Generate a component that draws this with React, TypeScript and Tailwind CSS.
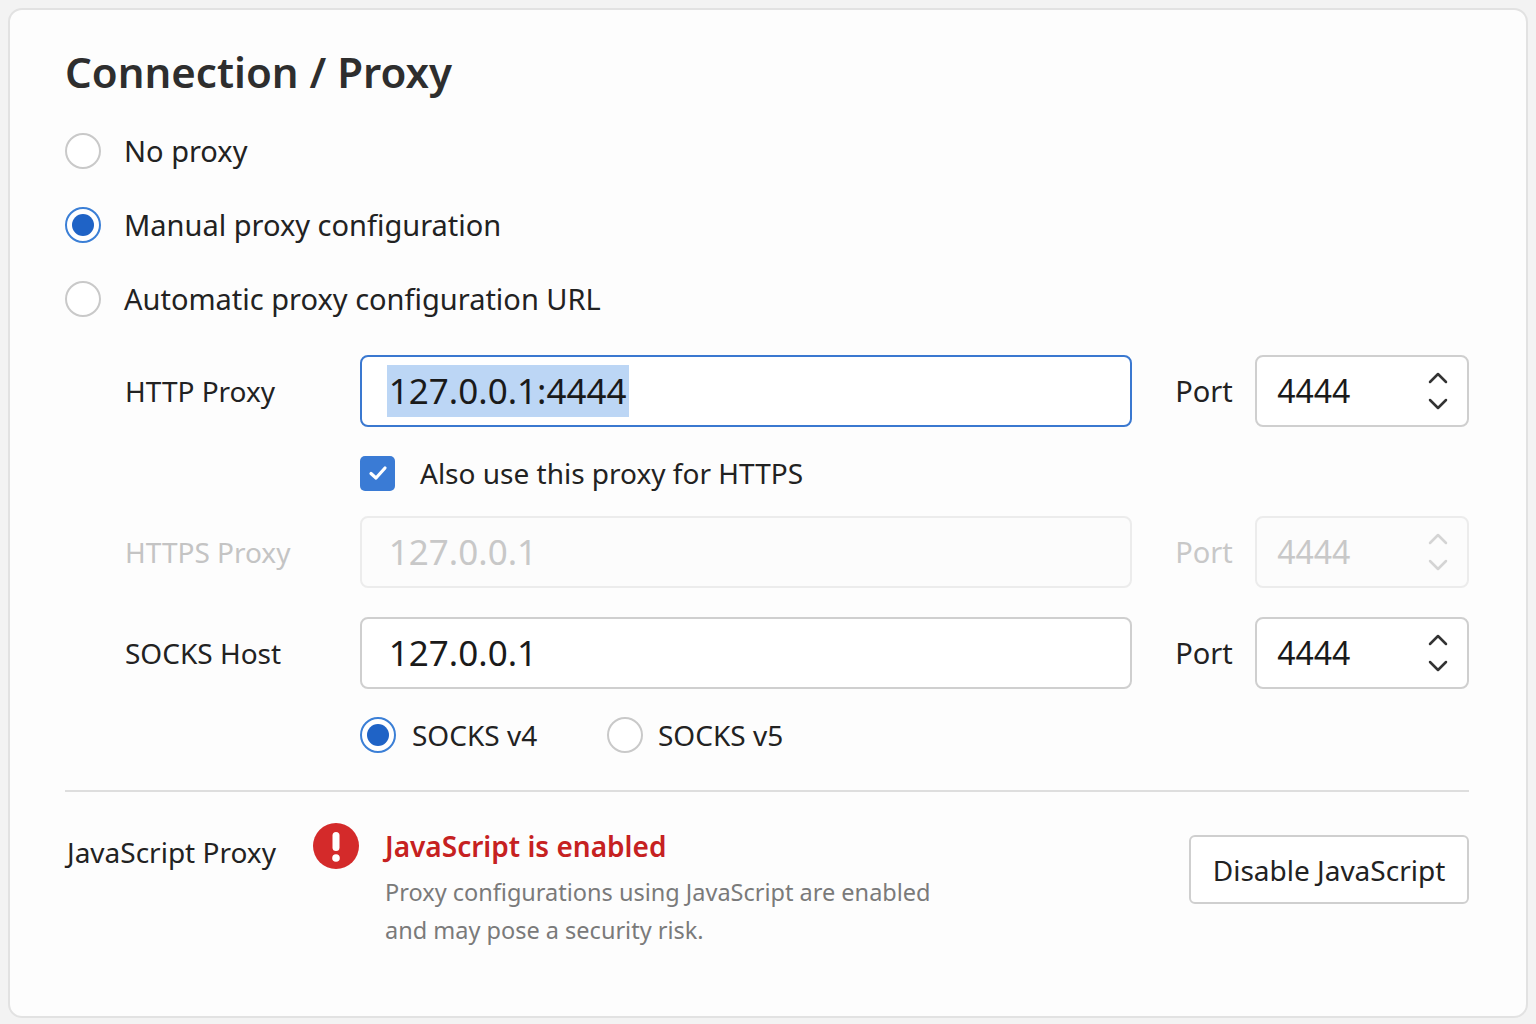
import React from "react";

const F = { fontFamily: '"Noto Sans", "Liberation Sans", sans-serif' };

function Radio({ on, disabled }: { on?: boolean; disabled?: boolean }) {
  return on ? (
    <span className="w-[36px] h-[36px] rounded-full border-[2px] border-[#3b7fd6] flex items-center justify-center shrink-0 bg-white">
      <span className="w-[22px] h-[22px] rounded-full bg-[#1f63c6]" />
    </span>
  ) : (
    <span className={`w-[36px] h-[36px] rounded-full border-[2px] shrink-0 bg-white ${disabled ? "border-[#e0e0e0]" : "border-[#c9c9c9]"}`} />
  );
}

function Spinner({ dim }: { dim?: boolean }) {
  const c = dim ? "#d4d4d4" : "#333";
  return (
    <svg width="22" height="44" viewBox="0 0 22 44" fill="none" stroke={c} strokeWidth="2.5" strokeLinecap="round" strokeLinejoin="round">
      <path d="M3 13 L11 5 L19 13" />
      <path d="M3 31 L11 39 L19 31" />
    </svg>
  );
}

function Row({ label, value, dim, focused, port }: { label: string; value: React.ReactNode; dim?: boolean; focused?: boolean; port: string }) {
  return (
    <div className="flex items-center h-[72px]">
      <div className={`w-[235px] text-[28px] ${dim ? "text-[#c4c4c4]" : "text-[#222]"}`}>{label}</div>
      <div
        className={`w-[773px] h-[72px] rounded-[8px] flex items-center px-[27px] text-[35px] ${
          focused ? "border-[2.5px] border-[#3a78d0] bg-white" : dim ? "border-[2px] border-[#ececec] bg-[#fcfcfc]" : "border-[2px] border-[#cfcfcf] bg-white"
        } ${dim ? "text-[#c8c8c8]" : "text-[#1a1a1a]"}`}
      >
        {value}
      </div>
      <div className={`ml-[43px] w-[80px] text-[29px] ${dim ? "text-[#c8c8c8]" : "text-[#222]"}`}>Port</div>
      <div
        className={`w-[214px] h-[72px] rounded-[8px] flex items-center justify-between pl-[20px] pr-[18px] text-[32px] ${
          dim ? "border-[2px] border-[#ececec] text-[#c8c8c8] bg-[#fcfcfc]" : "border-[2px] border-[#cfcfcf] text-[#1a1a1a] bg-white"
        }`}
      >
        <span>{port}</span>
        <Spinner dim={dim} />
      </div>
    </div>
  );
}

export default function App() {
  return (
    <div style={F} className="w-[1536px] h-[1024px] bg-[#f3f3f3] p-[8px]">
      <div className="w-[1520px] h-[1010px] bg-[#fdfdfd] border-[2px] border-[#e2e2e2] rounded-[14px] pl-[55px] pr-[57px] pt-[32px]">
        <h1 className="text-[42px] font-semibold text-[#2e2e2e] leading-[60px]">Connection / Proxy</h1>
        <div className="mt-[31px] flex flex-col gap-[38px]">
          {[
            ["No proxy", false],
            ["Manual proxy configuration", true],
            ["Automatic proxy configuration URL", false],
          ].map(([t, on]) => (
            <div key={t as string} className="flex items-center gap-[23px] h-[36px]">
              <Radio on={on as boolean} />
              <span className="text-[29px] text-[#222]">{t}</span>
            </div>
          ))}
        </div>
        <div className="ml-[60px] mt-[38px]">
          <Row
            label="HTTP Proxy"
            focused
            port="4444"
            value={<span className="bg-[#bcd6f5] px-[2px] -mx-[2px]">127.0.0.1:4444</span>}
          />
          <div className="flex items-center h-[36px] mt-[28px] ml-[235px] gap-[25px]">
            <span className="w-[35px] h-[35px] rounded-[5px] bg-[#3a7bd5] flex items-center justify-center">
              <svg width="22" height="22" viewBox="0 0 22 22" fill="none" stroke="white" strokeWidth="3.2" strokeLinecap="round" strokeLinejoin="round">
                <path d="M4 11.5 L9 16 L18 6" />
              </svg>
            </span>
            <span className="text-[28px] text-[#222]">Also use this proxy for HTTPS</span>
          </div>
          <div className="mt-[25px]">
            <Row label="HTTPS Proxy" dim port="4444" value="127.0.0.1" />
          </div>
          <div className="mt-[29px]">
            <Row label="SOCKS Host" port="4444" value="127.0.0.1" />
          </div>
          <div className="flex items-center h-[36px] mt-[28px] ml-[235px]">
            <Radio on />
            <span className="ml-[16px] text-[28px] text-[#222] w-[195px]">SOCKS v4</span>
            <Radio />
            <span className="ml-[15px] text-[28px] text-[#222]">SOCKS v5</span>
          </div>
        </div>
        <div className="mt-[37px] h-[2px] bg-[#dedede]" />
        <div className="flex mt-[29px]">
          <div className="w-[248px] pt-[10px] pl-[2px] text-[28px] text-[#222]">JavaScript Proxy</div>
          <svg width="46" height="46" viewBox="0 0 46 46" className="mt-[2px] shrink-0">
            <circle cx="23" cy="23" r="23" fill="#d42a2a" />
            <rect x="19.5" y="9" width="7" height="19" rx="3.5" fill="white" />
            <circle cx="23" cy="35" r="3.8" fill="white" />
          </svg>
          <div className="ml-[26px] flex-1">
            <div className="text-[28px] font-semibold text-[#c62121] leading-[50px]">JavaScript is enabled</div>
            <div className="text-[23.5px] text-[#7a7a7a] leading-[38px] mt-[2px]">
              Proxy configurations using JavaScript are enabled
              <br />
              and may pose a security risk.
            </div>
          </div>
          <button className="mt-[14px] w-[280px] h-[69px] rounded-[6px] border-[2px] border-[#cfcfcf] bg-white text-[28px] text-[#222]">
            Disable JavaScript
          </button>
        </div>
      </div>
    </div>
  );
}
